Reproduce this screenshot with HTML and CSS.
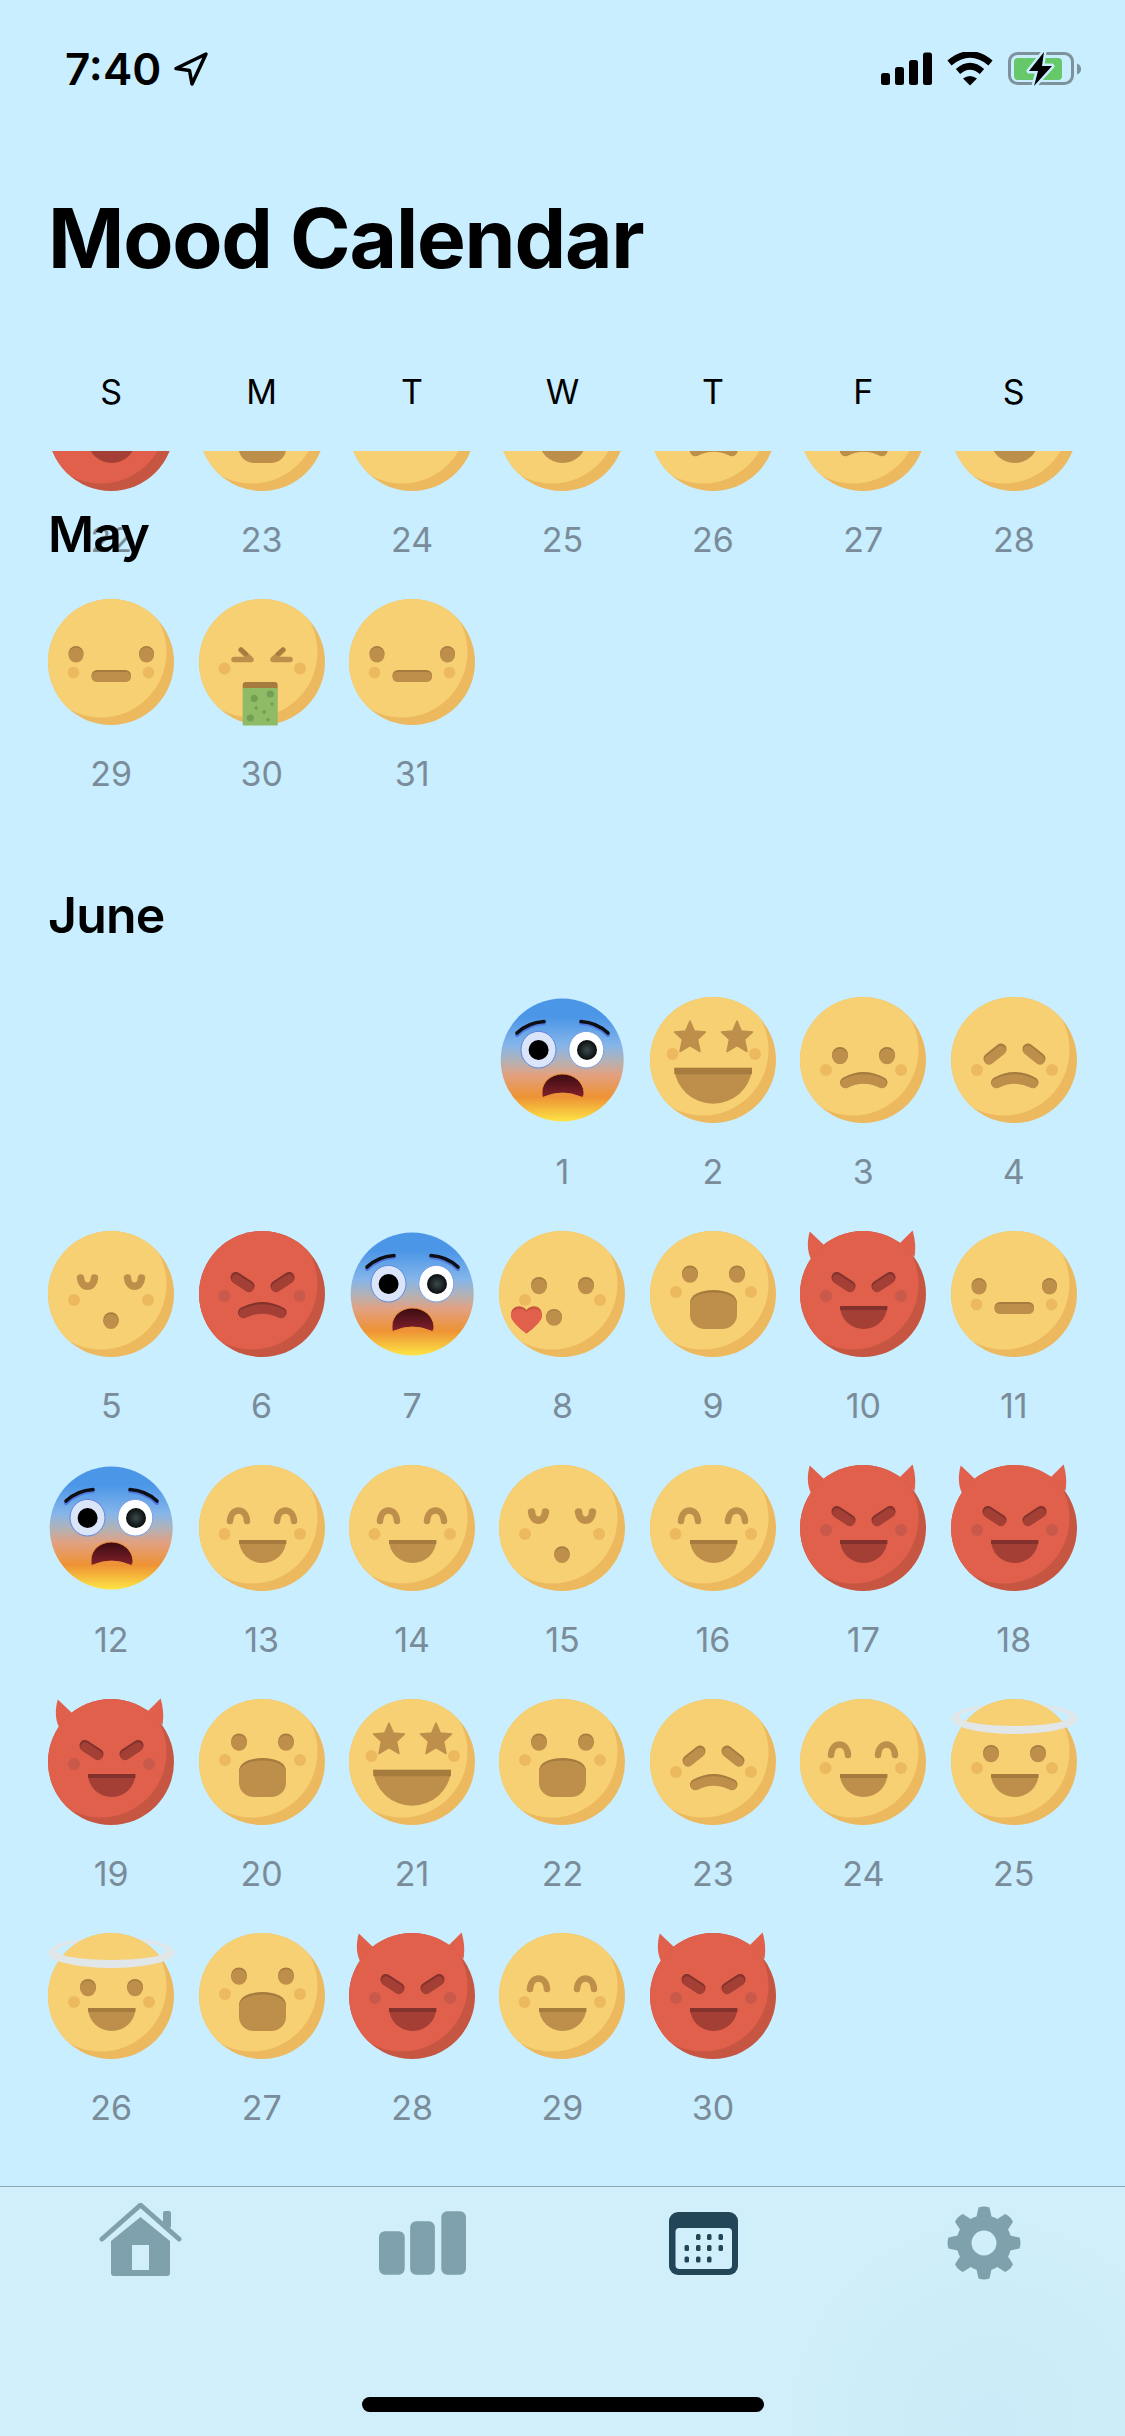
FILE: index.html
```html
<!DOCTYPE html>
<html lang="en">
<head>
    <meta charset="UTF-8">
    <meta name="viewport" content="width=device-width, initial-scale=1.0">
    <title>Mood Calendar</title>
    <link rel="stylesheet" href="styles.css">
</head>
<body>
    <!-- Shared face drawings, every day below points at one of these -->
    <svg class="face-defs" aria-hidden="true">
        <defs>
            <clipPath id="face-clip"><circle cx="63" cy="63" r="63"/></clipPath>
            <linearGradient id="fear-skin" x1="0" y1="0" x2="0" y2="1">
                <stop offset="0.15" stop-color="#4b96e7"/>
                <stop offset="0.38" stop-color="#85b5ea"/>
                <stop offset="0.5" stop-color="#b0b2b8"/>
                <stop offset="0.62" stop-color="#e2a181"/>
                <stop offset="0.8" stop-color="#ee9234"/>
                <stop offset="1" stop-color="#fde445"/>
            </linearGradient>
            <linearGradient id="fear-mouth" x1="0" y1="0" x2="0" y2="1">
                <stop offset="0" stop-color="#3a0b10"/>
                <stop offset="1" stop-color="#83212c"/>
            </linearGradient>
            <radialGradient id="fear-pupil">
                <stop offset="0" stop-color="#3c4a4c"/>
                <stop offset="1" stop-color="#0a0d0e"/>
            </radialGradient>
            <clipPath id="halo-front"><rect x="0" y="18" width="127" height="20"/></clipPath>
            <path id="halo-ring" fill-rule="evenodd" fill="#e1e6e9" d="M0.5 19.5a63 15.5 0 1 0 126 0a63 15.5 0 1 0 -126 0zM8.5 17.5a55 9.5 0 1 0 110 0a55 9.5 0 1 0 -110 0z"/>

            <g id="skin-yellow">
                <circle cx="63" cy="63" r="63" fill="#edb95f"/>
                <circle cx="53" cy="53" r="65.5" fill="#f6d073" clip-path="url(#face-clip)"/>
            </g>
            <g id="skin-red">
                <circle cx="63" cy="63" r="63" fill="#c65642"/>
                <circle cx="53" cy="53" r="65.5" fill="#e0604c" clip-path="url(#face-clip)"/>
            </g>

            <path id="star" d="M0 -15.5L4.3 -5.5L15.5 -4.5L7.5 3L10 15L0 9L-10 15L-7.5 3L-15.5 -4.5L-4.3 -5.5Z" stroke-linejoin="round" stroke-width="1.5"/>
            <path id="gear-tooth" d="M-5.5 -35.5Q0 -37.5 5.5 -35.5L8 -24H-8Z"/>
        </defs>

        <symbol id="neutral" viewBox="0 0 126 126">
            <use href="#skin-yellow"/>
            <g fill="#edb95f"><ellipse cx="25.5" cy="73.5" rx="5.8" ry="6"/><ellipse cx="100.5" cy="73.5" rx="5.8" ry="6"/></g>
            <g fill="#a67b3e"><circle cx="28" cy="54.5" r="7.5"/><circle cx="98.5" cy="54.5" r="7.5"/><rect x="43.5" y="71" width="39.5" height="11" rx="5.5"/></g>
            <g fill="#bd8f4a"><circle cx="28" cy="56" r="7.5"/><circle cx="98.5" cy="56" r="7.5"/><rect x="43.5" y="73" width="39.5" height="10" rx="5"/></g>
        </symbol>

        <symbol id="sick" viewBox="0 0 126 126">
            <use href="#skin-yellow"/>
            <g fill="#edb95f"><circle cx="25.5" cy="69.5" r="6"/><circle cx="101" cy="69.5" r="6"/></g>
            <g fill="none" stroke-linecap="round" stroke-linejoin="round" stroke-width="5.5">
                <path stroke="#bd8f4a" d="M35 60.5H52L42 51"/>
                <path stroke="#bd8f4a" d="M91 60.5H74L84 51"/>
                <path stroke="#a67b3e" stroke-width="4" d="M42 50.5L47 55M84 50.5L79 55"/>
            </g>
            <path fill="#a67b3e" d="M43.7 90V86a3 3 0 0 1 3 -3H75.7a3 3 0 0 1 3 3V90Z"/>
            <rect x="43.7" y="89" width="35" height="37.5" fill="#8fba66"/>
            <g fill="#739f55">
                <circle cx="55.2" cy="99.3" r="3.6"/><circle cx="71.2" cy="95" r="3.6"/><circle cx="51.3" cy="119" r="3.6"/>
                <circle cx="57.3" cy="109" r="1.7"/><circle cx="65.2" cy="113" r="1.9"/><circle cx="73" cy="105" r="1.7"/><circle cx="69" cy="120.7" r="1.7"/>
            </g>
        </symbol>

        <symbol id="fear" viewBox="0 0 126 126">
            <circle cx="63.2" cy="63" r="61.5" fill="url(#fear-skin)"/>
            <g fill="none" stroke-linecap="round">
                <path stroke="#4f78dd" stroke-width="4" d="M18 38Q29 27 45 26M109 38Q98 27 82 26"/>
                <path stroke="#0e0f14" stroke-width="3.6" d="M18 36Q29 25.5 45 24.5M109 36Q98 25.5 82 24.5"/>
            </g>
            <ellipse cx="39.5" cy="52.7" rx="17.5" ry="18.3" fill="#dbe5fa" stroke="#5f86dc" stroke-width="1"/>
            <ellipse cx="87.3" cy="52.7" rx="17.5" ry="18.3" fill="#ffffff" stroke="#7a9fe6" stroke-width="1"/>
            <circle cx="39.6" cy="53" r="10" fill="#000"/>
            <circle cx="88" cy="53" r="10" fill="url(#fear-pupil)"/>
            <path fill="url(#fear-mouth)" stroke="#ee9234" stroke-width="1" d="M43 95C43 85 52 77 63.5 77C75 77 84 85 85 95C85 99 84 101 82 100Q63.5 92 45 100C43 101 43 99 43 95Z"/>
        </symbol>

        <symbol id="star-eyes" viewBox="0 0 126 126">
            <use href="#skin-yellow"/>
            <g fill="#edb95f"><circle cx="22.5" cy="57" r="6"/><circle cx="105" cy="57" r="6"/></g>
            <g fill="#bd8f4a" stroke="#bd8f4a"><use href="#star" x="40" y="39.5"/><use href="#star" x="87" y="39.5"/></g>
            <path fill="#bd8f4a" d="M24.3 71H102V72A39 38 0 0 1 24.3 72Z"/>
            <rect x="24.3" y="70.7" width="77.7" height="6.5" fill="#a67b3e"/>
        </symbol>

        <symbol id="frown" viewBox="0 0 126 126">
            <use href="#skin-yellow"/>
            <g fill="#edb95f"><circle cx="26" cy="73" r="6"/><circle cx="101" cy="73" r="6"/></g>
            <g fill="#a67b3e"><circle cx="40" cy="58" r="8"/><circle cx="87" cy="58" r="8"/></g>
            <g fill="#bd8f4a"><circle cx="40" cy="59.5" r="7.8"/><circle cx="87" cy="59.5" r="7.8"/></g>
            <g fill="none" stroke-linecap="round" stroke-width="11">
                <path stroke="#a67b3e" d="M45.5 85.5Q63.5 75.5 82 85.5"/>
                <path stroke="#bd8f4a" stroke-width="9.5" d="M45.5 86.5Q63.5 77.5 82 86.5"/>
            </g>
        </symbol>

        <symbol id="sad" viewBox="0 0 126 126">
            <use href="#skin-yellow"/>
            <g fill="#edb95f"><circle cx="26" cy="73" r="6"/><circle cx="101" cy="73" r="6"/></g>
            <g fill="none" stroke-linecap="round" stroke-width="11">
                <path stroke="#a67b3e" d="M38 61.5L50 52M89 61.5L77 52"/>
                <path stroke="#bd8f4a" stroke-width="9.5" d="M38 63L50 53.5M89 63L77 53.5"/>
                <path stroke="#a67b3e" d="M45.5 85.5Q63.5 75.5 82 85.5"/>
                <path stroke="#bd8f4a" stroke-width="9.5" d="M45.5 86.5Q63.5 77.5 82 86.5"/>
            </g>
        </symbol>

        <symbol id="kiss" viewBox="0 0 126 126">
            <use href="#skin-yellow"/>
            <g fill="#edb95f"><circle cx="26" cy="69" r="6"/><circle cx="100" cy="69" r="6"/></g>
            <g fill="none" stroke="#bd8f4a" stroke-width="7.5" stroke-linecap="round">
                <path d="M32.5 47C33.5 58 45.5 58 46.5 47"/>
                <path d="M79.5 47C80.5 58 92.5 58 93.5 47"/>
            </g>
            <circle cx="63" cy="89" r="7.8" fill="#a67b3e"/>
            <circle cx="63" cy="90.5" r="7.6" fill="#bd8f4a"/>
        </symbol>

        <symbol id="angry" viewBox="0 0 126 126">
            <use href="#skin-red"/>
            <g fill="#c9594a"><circle cx="25.5" cy="65" r="6"/><circle cx="100.6" cy="65" r="6"/></g>
            <g fill="none" stroke-linecap="round" stroke-width="11">
                <path stroke="#82312c" d="M37 46.5L50 55M90 46.5L77 55"/>
                <path stroke="#a33f35" stroke-width="9.5" d="M37 48L50 56.5M90 48L77 56.5"/>
                <path stroke="#82312c" d="M44.5 81.5Q63 71.5 82 81.5"/>
                <path stroke="#a33f35" stroke-width="9.5" d="M44.5 82.5Q63 73.5 82 82.5"/>
            </g>
        </symbol>

        <symbol id="heart-kiss" viewBox="0 0 126 126">
            <use href="#skin-yellow"/>
            <g fill="#edb95f"><circle cx="26" cy="69" r="6"/><circle cx="101" cy="69" r="6"/></g>
            <g fill="#a67b3e"><circle cx="40" cy="54" r="8"/><circle cx="87" cy="54" r="8"/><circle cx="55" cy="86" r="8"/></g>
            <g fill="#bd8f4a"><circle cx="40" cy="55.5" r="7.8"/><circle cx="87" cy="55.5" r="7.8"/><circle cx="55" cy="87" r="7.8"/></g>
            <path fill="#c9543f" d="M27.5 79C23 73 12 74 12 84C12 89 20 97 27.5 102.5C35 97 43 89 43 84C43 74 32 73 27.5 79Z"/>
            <path fill="#e0604c" d="M27.5 81C23 76 12 77 12 85C12 90 20 97 27.5 102.5C35 97 43 90 43 85C43 77 32 76 27.5 81Z"/>
        </symbol>

        <symbol id="shock" viewBox="0 0 126 126">
            <use href="#skin-yellow"/>
            <g fill="#edb95f"><circle cx="26" cy="61" r="6"/><circle cx="101" cy="61" r="6"/></g>
            <g fill="#a67b3e"><circle cx="40" cy="42.5" r="8"/><circle cx="87" cy="42.5" r="8"/><path d="M40 72C40 64 50 59 63.5 59C77 59 87 64 87 72V80H40Z"/></g>
            <g fill="#bd8f4a"><circle cx="40" cy="44" r="7.8"/><circle cx="87" cy="44" r="7.8"/><path d="M40 74C40 66 50 61.5 63.5 61.5C77 61.5 87 66 87 74V84C87 92 80 98 72 98H55C47 98 40 92 40 84Z"/></g>
        </symbol>

        <symbol id="devil" viewBox="0 0 126 126">
            <path fill="#e0604c" d="M9.8 0.5L24 14L11 28C7 20 7 10 9.8 0.5Z"/>
            <path fill="#e0604c" d="M112.6 -0.5L100 12L114.5 26C116 16 115 8 112.6 -0.5Z"/>
            <use href="#skin-red"/>
            <g fill="#c9594a"><circle cx="26" cy="65" r="6"/><circle cx="101" cy="65" r="6"/></g>
            <g fill="none" stroke-linecap="round" stroke-width="11">
                <path stroke="#82312c" d="M37 46.5L50 55M90 46.5L77 55"/>
                <path stroke="#a33f35" stroke-width="9.5" d="M37 48L50 56.5M90 48L77 56.5"/>
            </g>
            <path fill="#a33f35" d="M40 75H87.3A23.6 23 0 0 1 40 75Z"/>
            <rect x="40" y="75" width="47.3" height="4" fill="#82312c"/>
        </symbol>

        <symbol id="happy" viewBox="0 0 126 126">
            <use href="#skin-yellow"/>
            <g fill="#edb95f"><circle cx="25.5" cy="69" r="6"/><circle cx="101" cy="69" r="6"/></g>
            <g fill="none" stroke-width="6.5" stroke-linecap="round">
                <path stroke="#bd8f4a" d="M31 56C32 42 47 42 48 56"/>
                <path stroke="#bd8f4a" d="M78 56C79 42 94 42 95 56"/>
            </g>
            <path fill="#bd8f4a" d="M40 75H87.3A23.6 23 0 0 1 40 75Z"/>
            <rect x="40" y="75" width="47.3" height="4" fill="#a67b3e"/>
        </symbol>

        <symbol id="halo" viewBox="0 0 126 126">
            <use href="#halo-ring"/>
            <use href="#skin-yellow"/>
            <use href="#halo-ring" clip-path="url(#halo-front)"/>
            <g fill="#edb95f"><circle cx="26" cy="69" r="6"/><circle cx="101" cy="69" r="6"/></g>
            <g fill="#a67b3e"><circle cx="40" cy="54" r="8"/><circle cx="87" cy="54" r="8"/></g>
            <g fill="#bd8f4a"><circle cx="40" cy="55.5" r="7.8"/><circle cx="87" cy="55.5" r="7.8"/></g>
            <path fill="#bd8f4a" d="M40 75H87.5A23.7 23 0 0 1 40 75Z"/>
            <rect x="40" y="75" width="47.5" height="4" rx="1" fill="#a67b3e"/>
        </symbol>
    </svg>

    <div class="status-bar">
        <div class="status-time">
            <span>7:40</span>
            <svg class="status-arrow" viewBox="0 0 36 36"><path d="M33 3L3 17.5L16.5 19.5L19 33Z" fill="none" stroke="#000" stroke-width="3.5" stroke-linejoin="round"/></svg>
        </div>
        <div class="status-icons">
            <svg class="status-signal" viewBox="0 0 52 34">
                <rect x="0" y="21" width="9" height="12" rx="2.5"/>
                <rect x="14" y="15" width="9" height="18" rx="2.5"/>
                <rect x="28" y="8" width="9" height="25" rx="2.5"/>
                <rect x="42" y="0.5" width="9" height="32.5" rx="2.5"/>
            </svg>
            <svg class="status-wifi" viewBox="0 0 46 34">
                <path d="M2.5 11Q23 -6 43.5 11M11 19.5Q23 9 35 19.5" fill="none" stroke="#000" stroke-width="6.5"/>
                <path d="M16 26.5Q23 21.5 30 26.5L23 33.5Z"/>
            </svg>
            <svg class="status-battery" viewBox="0 0 74 36">
                <rect x="1.5" y="2.5" width="63" height="30" rx="8" fill="none" stroke="#7e929c" stroke-width="3"/>
                <rect x="6" y="7" width="48" height="22" rx="4" fill="#66c868"/>
                <path d="M69 12.5C72 13.5 73 15.5 73 18C73 20.5 72 22.5 69 23.5Z" fill="#7e929c"/>
                <path d="M36 1L21 20H30L26 35L44 15H34Z" stroke="#c9eeff" stroke-width="5" stroke-linejoin="round"/>
                <path d="M36 1L21 20H30L26 35L44 15H34Z"/>
            </svg>
        </div>
    </div>

    <h1 class="page-title">Mood Calendar</h1>

    <div class="weekdays">
        <span>S</span><span>M</span><span>T</span><span>W</span><span>T</span><span>F</span><span>S</span>
    </div>

    <div class="calendar-scroll">
        <!-- Month title stuck to the top while May scrolls under it -->
        <h2 class="month-title month-stuck">May</h2>
        <div class="calendar-content">
            <div class="month-grid">
                <div class="day"><svg class="face"><use href="#devil"/></svg><span>22</span></div>
                <div class="day"><svg class="face"><use href="#shock"/></svg><span>23</span></div>
                <div class="day"><svg class="face"><use href="#neutral"/></svg><span>24</span></div>
                <div class="day"><svg class="face"><use href="#happy"/></svg><span>25</span></div>
                <div class="day"><svg class="face"><use href="#frown"/></svg><span>26</span></div>
                <div class="day"><svg class="face"><use href="#frown"/></svg><span>27</span></div>
                <div class="day"><svg class="face"><use href="#happy"/></svg><span>28</span></div>
                <div class="day"><svg class="face"><use href="#neutral"/></svg><span>29</span></div>
                <div class="day"><svg class="face"><use href="#sick"/></svg><span>30</span></div>
                <div class="day"><svg class="face"><use href="#neutral"/></svg><span>31</span></div>
            </div>

            <h2 class="month-title">June</h2>
            <div class="month-grid">
                <div class="day first-wed"><svg class="face"><use href="#fear"/></svg><span>1</span></div>
                <div class="day"><svg class="face"><use href="#star-eyes"/></svg><span>2</span></div>
                <div class="day"><svg class="face"><use href="#frown"/></svg><span>3</span></div>
                <div class="day"><svg class="face"><use href="#sad"/></svg><span>4</span></div>
                <div class="day"><svg class="face"><use href="#kiss"/></svg><span>5</span></div>
                <div class="day"><svg class="face"><use href="#angry"/></svg><span>6</span></div>
                <div class="day"><svg class="face"><use href="#fear"/></svg><span>7</span></div>
                <div class="day"><svg class="face"><use href="#heart-kiss"/></svg><span>8</span></div>
                <div class="day"><svg class="face"><use href="#shock"/></svg><span>9</span></div>
                <div class="day"><svg class="face"><use href="#devil"/></svg><span>10</span></div>
                <div class="day"><svg class="face"><use href="#neutral"/></svg><span>11</span></div>
                <div class="day"><svg class="face"><use href="#fear"/></svg><span>12</span></div>
                <div class="day"><svg class="face"><use href="#happy"/></svg><span>13</span></div>
                <div class="day"><svg class="face"><use href="#happy"/></svg><span>14</span></div>
                <div class="day"><svg class="face"><use href="#kiss"/></svg><span>15</span></div>
                <div class="day"><svg class="face"><use href="#happy"/></svg><span>16</span></div>
                <div class="day"><svg class="face"><use href="#devil"/></svg><span>17</span></div>
                <div class="day"><svg class="face"><use href="#devil"/></svg><span>18</span></div>
                <div class="day"><svg class="face"><use href="#devil"/></svg><span>19</span></div>
                <div class="day"><svg class="face"><use href="#shock"/></svg><span>20</span></div>
                <div class="day"><svg class="face"><use href="#star-eyes"/></svg><span>21</span></div>
                <div class="day"><svg class="face"><use href="#shock"/></svg><span>22</span></div>
                <div class="day"><svg class="face"><use href="#sad"/></svg><span>23</span></div>
                <div class="day"><svg class="face"><use href="#happy"/></svg><span>24</span></div>
                <div class="day"><svg class="face"><use href="#halo"/></svg><span>25</span></div>
                <div class="day"><svg class="face"><use href="#halo"/></svg><span>26</span></div>
                <div class="day"><svg class="face"><use href="#shock"/></svg><span>27</span></div>
                <div class="day"><svg class="face"><use href="#devil"/></svg><span>28</span></div>
                <div class="day"><svg class="face"><use href="#happy"/></svg><span>29</span></div>
                <div class="day"><svg class="face"><use href="#devil"/></svg><span>30</span></div>
            </div>
        </div>
    </div>

    <div class="tab-bar">
        <div class="tab-icons">
            <svg class="tab-home" viewBox="0 0 84 74">
                <path d="M3 36L41.5 2L80 36" fill="none" stroke="#7fa0ad" stroke-width="5" stroke-linecap="round" stroke-linejoin="round"/>
                <rect x="64" y="8" width="8" height="17" rx="2" fill="#7fa0ad"/>
                <path fill-rule="evenodd" fill="#7fa0ad" d="M41.5 14L71 38V70a3 3 0 0 1 -3 3H15a3 3 0 0 1 -3 -3V38ZM33 42V67H50V42Z"/>
            </svg>
            <svg class="tab-chart" viewBox="0 0 88 64" fill="#7fa0ad">
                <rect x="0" y="20" width="26" height="44" rx="6"/>
                <rect x="31.5" y="10" width="25" height="54" rx="6"/>
                <rect x="63" y="0" width="25" height="64" rx="6"/>
            </svg>
            <svg class="tab-calendar" viewBox="0 0 69 63">
                <rect x="0" y="0" width="69" height="63" rx="9" fill="#224657"/>
                <rect x="6.5" y="16" width="56.5" height="41" rx="4" fill="#d0effb"/>
                <g fill="#224657">
                    <rect x="27" y="22" width="4.5" height="6" rx="1.5"/><rect x="38" y="22" width="4.5" height="6" rx="1.5"/><rect x="49.5" y="22" width="4.5" height="6" rx="1.5"/>
                    <rect x="15.5" y="33" width="4.5" height="6" rx="1.5"/><rect x="27" y="33" width="4.5" height="6" rx="1.5"/><rect x="38" y="33" width="4.5" height="6" rx="1.5"/><rect x="49.5" y="33" width="4.5" height="6" rx="1.5"/>
                    <rect x="15.5" y="44.5" width="4.5" height="6" rx="1.5"/><rect x="27" y="44.5" width="4.5" height="6" rx="1.5"/><rect x="38" y="44.5" width="4.5" height="6" rx="1.5"/>
                </g>
            </svg>
            <svg class="tab-gear" viewBox="-37 -37 74 74" fill="#7fa0ad">
                <circle r="20" fill="none" stroke="#7fa0ad" stroke-width="15"/>
                <use href="#gear-tooth"/>
                <use href="#gear-tooth" transform="rotate(45)"/>
                <use href="#gear-tooth" transform="rotate(90)"/>
                <use href="#gear-tooth" transform="rotate(135)"/>
                <use href="#gear-tooth" transform="rotate(180)"/>
                <use href="#gear-tooth" transform="rotate(225)"/>
                <use href="#gear-tooth" transform="rotate(270)"/>
                <use href="#gear-tooth" transform="rotate(315)"/>
            </svg>
        </div>
        <div class="home-indicator"></div>
    </div>
</body>
</html>
```

FILE: styles.css
```css
* {
    margin: 0;
    padding: 0;
    box-sizing: border-box;
}

html,
body {
    width: 1125px;
    height: 2436px;
}

body {
    display: flex;
    flex-direction: column;
    overflow: hidden;
    background-color: #c9eeff;
    color: #000;
    font-family: Inter, "Liberation Sans", sans-serif;
}

.face-defs {
    display: block;
    width: 0;
    height: 0;
}

/* Status bar */
.status-bar {
    display: flex;
    justify-content: space-between;
    align-items: center;
    height: 52px;
    margin-top: 43px;
    padding: 0 43px 0 65px;
}

.status-time {
    display: flex;
    align-items: center;
    gap: 12px;
    font-size: 44px;
    font-weight: 600;
    line-height: 52px;
}

.status-arrow {
    width: 36px;
    height: 36px;
}

.status-icons {
    display: flex;
    align-items: center;
}

.status-signal {
    width: 52px;
    height: 34px;
    margin-right: 14px;
}

.status-wifi {
    width: 46px;
    height: 34px;
    margin-right: 15px;
}

.status-battery {
    width: 74px;
    height: 36px;
}

/* Title and week header */
.page-title {
    padding: 94px 0 0 48px;
    font-size: 82px;
    font-weight: 700;
    letter-spacing: -1.2px;
    line-height: 100px;
}

.weekdays {
    display: grid;
    grid-template-columns: repeat(7, 1fr);
    padding: 83px 36px 39px;
    font-size: 34px;
    line-height: 40px;
    text-align: center;
}

/* Scrolling calendar */
.calendar-scroll {
    position: relative;
    flex: 1;
    min-height: 0;
    overflow: hidden;
}

.calendar-content {
    margin-top: -86px;
    padding: 0 36px;
}

.month-grid {
    display: grid;
    grid-template-columns: repeat(7, 1fr);
}

.month-title {
    height: 164px;
    padding: 52px 0 0 12px;
    font-size: 50px;
    font-weight: 600;
    letter-spacing: -0.8px;
    line-height: 60px;
}

.month-stuck {
    position: absolute;
    top: 53px;
    left: 36px;
    height: auto;
    padding: 0 0 0 12px;
}

.day {
    display: flex;
    flex-direction: column;
    align-items: center;
    height: 234px;
}

.first-wed {
    grid-column-start: 4;
}

.face {
    flex: none;
    width: 126px;
    height: 126px;
    overflow: visible;
}

symbol {
    overflow: visible;
}

.day span {
    margin-top: 29px;
    color: #7a8c99;
    font-size: 34px;
    line-height: 40px;
}

/* Tab bar */
.tab-bar {
    display: flex;
    flex-direction: column;
    flex: none;
    height: 250px;
    border-top: 1px solid #86a6b4;
    background-color: #d0effb;
    background-image: radial-gradient(circle at 88% 95%, #cbebf8 0, #d0effb 20%);
}

.tab-icons {
    display: flex;
    align-items: flex-start;
    height: 210px;
    padding: 16px 0 0 99px;
}

.tab-home {
    width: 84px;
    height: 74px;
    margin-right: 196px;
}

.tab-chart {
    width: 87px;
    height: 64px;
    margin-top: 8px;
    margin-right: 203px;
}

.tab-calendar {
    width: 69px;
    height: 63px;
    margin-top: 9px;
    margin-right: 209px;
}

.tab-gear {
    width: 74px;
    height: 74px;
    margin-top: 3px;
}

.home-indicator {
    width: 402px;
    height: 15px;
    margin: 0 auto;
    border-radius: 8px;
    background-color: #000;
}
```
